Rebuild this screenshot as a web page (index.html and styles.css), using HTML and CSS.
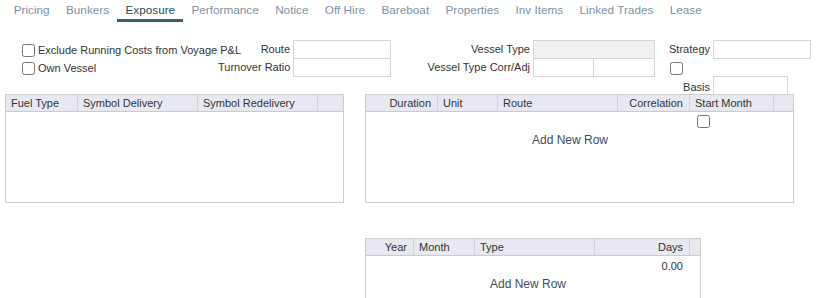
FILE: index.html
```html
<!DOCTYPE html>
<html lang="en">
<head>
    <meta charset="UTF-8">
    <meta name="viewport" content="width=device-width, initial-scale=1.0">
    <title>Exposure</title>
    <link rel="stylesheet" href="styles.css">
</head>
<body>
    <nav class="tabs">
        <a class="tab">Pricing</a>
        <a class="tab">Bunkers</a>
        <a class="tab active">Exposure</a>
        <a class="tab">Performance</a>
        <a class="tab">Notice</a>
        <a class="tab">Off Hire</a>
        <a class="tab">Bareboat</a>
        <a class="tab">Properties</a>
        <a class="tab">Inv Items</a>
        <a class="tab">Linked Trades</a>
        <a class="tab">Lease</a>
    </nav>

    <div class="props">
        <!-- row 1 -->
        <label class="check"><input type="checkbox"> Exclude Running Costs from Voyage P&amp;L</label>
        <div class="lbl">Route</div>
        <div><input class="field" type="text"></div>
        <div class="lbl">Vessel Type</div>
        <div><input class="field wide readonly" type="text" readonly></div>
        <div class="lbl">Strategy</div>
        <div><input class="field" type="text"></div>

        <!-- row 2 -->
        <label class="check"><input type="checkbox"> Own Vessel</label>
        <div class="lbl">Turnover Ratio</div>
        <div><input class="field" type="text"></div>
        <div class="lbl">Vessel Type Corr/Adj</div>
        <div class="pair">
            <input class="field half" type="text">
            <input class="field half" type="text">
        </div>
        <div class="check solo"><input type="checkbox"></div>
        <div></div>

        <!-- row 3 -->
        <div class="lbl basis-lbl">Basis</div>
        <div class="basis-cell"><input class="field short" type="text"></div>
    </div>

    <div class="grids">
        <div class="grid grid-fuel">
            <div class="head">
                <span class="c72">Fuel Type</span>
                <span class="c120">Symbol Delivery</span>
                <span class="c120">Symbol Redelivery</span>
            </div>
        </div>

        <div class="grid grid-exp">
            <div class="head">
                <span class="c72 r">Duration</span>
                <span class="c60">Unit</span>
                <span class="c120">Route</span>
                <span class="c72 r">Correlation</span>
                <span class="c84">Start Month</span>
            </div>
            <div class="row">
                <span class="c72"></span>
                <span class="c60"></span>
                <span class="c120"></span>
                <span class="c72"></span>
                <span class="c84 cb"><input type="checkbox"></span>
            </div>
            <div class="add exp-add">Add New Row</div>
        </div>
    </div>

    <div class="bottom">
        <div class="grid grid-off">
            <div class="head">
                <span class="c48 r">Year</span>
                <span class="c61">Month</span>
                <span class="c120">Type</span>
                <span class="c95 r">Days</span>
            </div>
            <div class="row tall">
                <span class="c48"></span>
                <span class="c61"></span>
                <span class="c120"></span>
                <span class="c95 r">0.00</span>
            </div>
            <div class="add off-add">Add New Row</div>
        </div>
    </div>
</body>
</html>
```

FILE: styles.css
```css
body {
    margin: 0;
    font-family: "Liberation Sans", Arial, sans-serif;
    font-size: 11px;
    color: #333;
    background-color: #fff;
}

/* tab strip */
.tabs {
    display: flex;
    padding-left: 5.5px;
    height: 22px;
    font-size: 11.75px;
}
.tab {
    padding: 0 8.2px;
    line-height: 20px;
    height: 19px;
    color: #7b93a6;
    border-bottom: 3px solid transparent;
    cursor: pointer;
}
.tab.active {
    color: #2f4b5c;
    border-bottom-color: #3b6073;
}

/* properties form */
.props {
    display: grid;
    grid-template-columns: 196px 75px 98px 142px 122px 58px 99px;
    grid-template-rows: repeat(3, 18px);
    margin: 18px 0 0 22px;
}
.check {
    display: flex;
    align-items: center;
    gap: 3px;
    white-space: nowrap;
    padding-top: 2px;
}
.check input {
    margin: 0;
    width: 13px;
    height: 13px;
}
.check.solo {
    padding-left: 15px;
}
.lbl {
    text-align: right;
    padding-right: 3px;
    line-height: 18px;
    white-space: nowrap;
}
.field {
    display: block;
    box-sizing: border-box;
    width: 98px;
    height: 19px;
    margin: 0;
    border: 1px solid #d6d6d6;
    padding: 0 3px;
    font: inherit;
}
.field.wide {
    width: 122px;
}
.field.readonly {
    background-color: #f0f0f0;
}
.pair {
    display: flex;
}
.field.half {
    width: 61px;
}
.field.half + .field.half {
    margin-left: -1px;
    width: 62px;
}
.field.short {
    width: 75px;
}
.basis-lbl {
    grid-column: 6;
    grid-row: 3;
    padding-top: 2px;
}
.basis-cell {
    grid-column: 7;
    grid-row: 3;
}

/* grids */
.grids {
    display: flex;
    gap: 21px;
    padding-left: 5px;
}
.grid {
    box-sizing: border-box;
    border: 1px solid #cdcdcd;
}
.grid-fuel {
    width: 339px;
    height: 109px;
}
.grid-exp {
    width: 429px;
    height: 109px;
}
.bottom {
    padding-left: 365px;
    margin-top: 35px;
}
.grid-off {
    width: 336px;
    height: 80px;
}
.head {
    display: flex;
    box-sizing: border-box;
    height: 17px;
    background-color: #e8e9f0;
    border-bottom: 1px solid #c9c9cf;
}
.head span {
    box-sizing: border-box;
    border-right: 1px solid #d2d2da;
    padding: 0 5px;
    line-height: 16px;
    white-space: nowrap;
}
.head .r {
    padding-right: 6px;
}
.row {
    display: flex;
    height: 18px;
}
.row.tall {
    height: 20px;
}
.row span {
    box-sizing: border-box;
    line-height: 20px;
    padding: 0 7px;
}
.row .cb {
    display: flex;
    align-items: center;
}
.row .cb input {
    margin: 0;
    width: 13px;
    height: 13px;
}
.r {
    text-align: right;
}
.c48 { width: 48px; }
.c60 { width: 60px; }
.c61 { width: 61px; }
.c72 { width: 72px; }
.c84 { width: 84px; }
.c95 { width: 95px; }
.c120 { width: 120px; }

.add {
    text-align: center;
    font-size: 12px;
    color: #3d4d5e;
    line-height: 17px;
    padding-top: 2px;
}
.exp-add {
    width: 408px;
}
.off-add {
    width: 324px;
    padding-top: 0;
}
```
